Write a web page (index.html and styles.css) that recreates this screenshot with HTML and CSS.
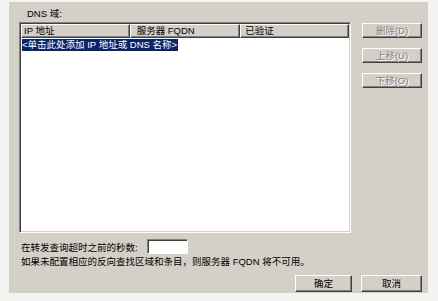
FILE: index.html
```html
<!DOCTYPE html>
<html>
<head>
<meta charset="utf-8">
<link rel="stylesheet" href="styles.css">
</head>
<body>
<div class="dialog">
  <div class="label">DNS 域:</div>
  <div class="main">
    <div class="list">
      <div class="header">
        <div class="col c1">IP 地址</div>
        <div class="col c2">服务器 FQDN</div>
        <div class="col c3">已验证</div>
        <div class="col-rest"></div>
      </div>
      <div class="body">
        <div class="row"><span class="sel">&lt;单击此处添加 IP 地址或 DNS 名称&gt;</span></div>
      </div>
    </div>
    <div class="side">
      <div class="btn disabled">删除(D)</div>
      <div class="btn disabled">上移(U)</div>
      <div class="btn disabled">下移(O)</div>
    </div>
  </div>
  <div class="line1">
    <span class="prompt">在转发查询超时之前的秒数:</span>
    <div class="input"></div>
  </div>
  <div class="line2">如果未配置相应的反向查找区域和条目，则服务器 FQDN 将不可用。</div>
  <div class="footer">
    <div class="btn ok">确定</div>
    <div class="btn cancel">取消</div>
  </div>
</div>
</body>
</html>
```

FILE: styles.css
```css
html, body {
  margin: 0;
  padding: 0;
  background: #f3f3f1;
  width: 438px;
  height: 301px;
  overflow: hidden;
}
body {
  font-family: "Liberation Sans", "Noto Sans CJK SC", sans-serif;
  font-size: 9.5px;
  color: #000;
}
.dialog {
  margin: 2px 0 0 9px;
  width: 419px;
  height: 291px;
  box-sizing: border-box;
  background: #d4d0c8;
  padding: 5px 6px 1px 10px;
  display: flex;
  flex-direction: column;
}
.label {
  height: 13px;
  line-height: 13px;
  padding-left: 8px;
  margin-bottom: 2px;
}
.main {
  display: flex;
  gap: 11px;
  height: 211px;
}
.list {
  width: 332px;
  height: 211px;
  box-sizing: border-box;
  border: 1px solid;
  border-color: #808080 #ffffff #ffffff #808080;
  box-shadow: inset 1px 1px 0 #404040, inset -1px -1px 0 #d4d0c8;
  padding: 1px;
  display: flex;
  flex-direction: column;
  background: #fff;
}
.header {
  display: flex;
  height: 14px;
  background: #d4d0c8;
}
.col {
  box-sizing: border-box;
  height: 14px;
  line-height: 12px;
  padding-left: 2px;
  border-top: 1px solid #fff;
  border-left: 1px solid #fff;
  border-bottom: 1px solid #404040;
  border-right: 1px solid #404040;
  box-shadow: inset -1px -1px 0 #808080;
  white-space: nowrap;
  overflow: hidden;
}
.c1 { width: 109px; }
.c2 { width: 111px; padding-left: 6px; }
.c3 { width: 109px; padding-left: 4px; }
.col-rest {
  flex: 1;
  border-bottom: 1px solid #404040;
  box-sizing: border-box;
}
.body {
  flex: 1;
  background: #fff;
  padding-top: 1px;
}
.row {
  height: 12px;
  line-height: 12px;
  padding-left: 1px;
}
.sel {
  display: inline-block;
  background: #0a246a;
  color: #fff;
  height: 12px;
  padding-right: 1px;
}
.side {
  display: flex;
  flex-direction: column;
  gap: 10px;
  padding-top: 1px;
}
.btn {
  box-sizing: border-box;
  width: 60px;
  height: 15px;
  line-height: 13px;
  text-align: center;
  background: #d4d0c8;
  border: 1px solid;
  border-color: #ffffff #404040 #404040 #ffffff;
  box-shadow: inset -1px -1px 0 #808080;
  white-space: nowrap;
}
.disabled {
  color: #808080;
  text-shadow: 1px 1px 0 #ffffff;
}
.line1 {
  margin-top: 6px;
  height: 15px;
  display: flex;
  align-items: center;
  padding-left: 2px;
}
.prompt {
  width: 126px;
}
.input {
  width: 41px;
  height: 15px;
  box-sizing: border-box;
  background: #fff;
  border: 1px solid;
  border-color: #808080 #ffffff #ffffff #808080;
  box-shadow: inset 1px 1px 0 #404040;
}
.line2 {
  margin-top: 2px;
  height: 12px;
  line-height: 12px;
  padding-left: 2px;
  white-space: nowrap;
}
.footer {
  margin-top: 7px;
  display: flex;
  justify-content: flex-end;
  gap: 9px;
}
.footer .btn {
  height: 17px;
  line-height: 15px;
}
.ok { width: 57px; }
.cancel { width: 61px; }
```
